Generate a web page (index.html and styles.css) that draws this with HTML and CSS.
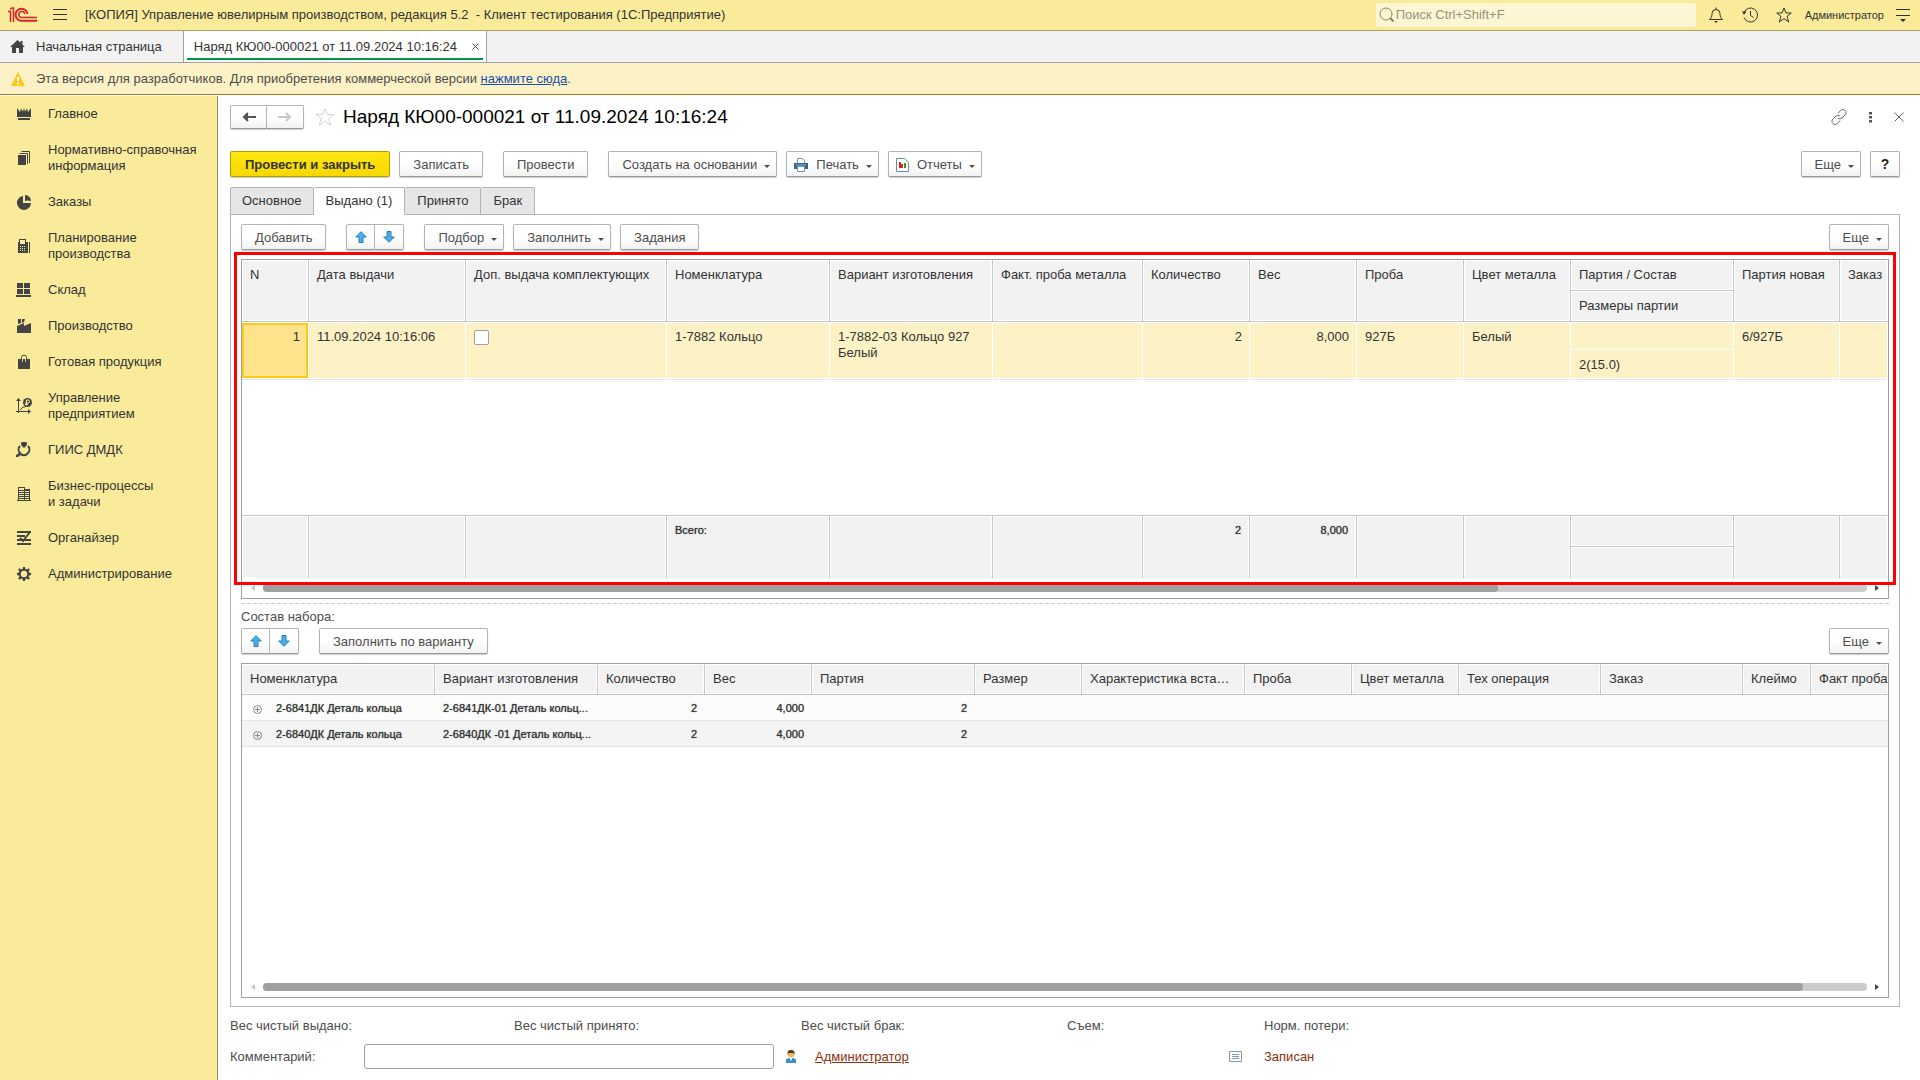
FILE: index.html
```html
<!DOCTYPE html>
<html lang="ru">
<head>
<meta charset="utf-8">
<title>Наряд КЮ00-000021 от 11.09.2024 10:16:24</title>
<link rel="stylesheet" href="styles.css">
</head>
<body>
<div class="app">
  <header class="titlebar">
    <svg class="logo" width="30" height="16" viewBox="0 0 30 16" fill="none" stroke="#d8232a"><path d="M0 4.500h2.500V15M2 2.500 4 1h1.500v14" stroke-width="1.500"/><path d="M19.500 7A6 6 0 1 0 14 13.700H29" stroke-width="2"/><path d="M16.800 7A3 3 0 1 0 14 10.500H29" stroke-width="1.500"/></svg>
    <button class="icon-btn" type="button" aria-label="Меню"><svg width="14" height="12" viewBox="0 0 14 12" stroke="#333"><path d="M0 .5h14M0 5.500h14M0 10.500h14"/></svg></button>
    <h1 class="app-title">[КОПИЯ] Управление ювелирным производством, редакция 5.2&nbsp; - Клиент тестирования (1С:Предприятие)</h1>
    <label class="search"><svg width="16" height="16" viewBox="0 0 16 16" fill="none" stroke="#8d865c"><circle cx="7" cy="7" r="6"/><path d="m11 11 3.500 3.500" stroke-width="2"/></svg><input type="text" placeholder="Поиск Ctrl+Shift+F" aria-label="Поиск"></label>
    <div class="title-tools">
      <button class="icon-btn" type="button" aria-label="Уведомления"><svg width="16" height="16" viewBox="0 0 16 16" fill="none" stroke="#333"><path d="M1.500 12.500c2-2 2.500-3 2.500-6A4 4 0 0 1 8 2.500a4 4 0 0 1 4 4c0 3 .5 4 2.500 6zM8 .5v2"/><path d="M6 14h4L8 16z" fill="#333" stroke="none"/></svg></button>
      <button class="icon-btn" type="button" aria-label="История"><svg width="16" height="16" viewBox="0 0 16 16" fill="none" stroke="#333"><path d="M2 5.500a7 7 0 1 1 0 5M8.500 4v4.500l3 2"/><path d="M0 4.500h4.500L2 8z" fill="#333" stroke="none"/></svg></button>
      <button class="icon-btn" type="button" aria-label="Избранное"><svg width="16" height="16" viewBox="0 0 16 16" fill="none" stroke="#333"><path d="m8 1 2 5h5.300l-4.200 3.300L12.700 15 8 11.600 3.300 15l1.600-5.700L.7 6H6z"/></svg></button>
    </div>
    <a class="user" href="#">Администратор</a>
    <button class="icon-btn" type="button" aria-label="Настройки"><svg width="14" height="14" viewBox="0 0 14 14"><path d="M0 1.500h14M0 7.500h14" stroke="#333"/><path d="M4 11h6l-3 3z" fill="#333"/></svg></button>
  </header>

  <nav class="windows">
    <a class="window-tab" href="#"><svg width="15" height="13" viewBox="0 0 15 13" fill="#444"><path d="M7.500 0 0 7h2v6h4V8h3v5h4V7h2l-2.500-2.300V1h-2v1.800z"/></svg>Начальная страница</a>
    <div class="window-tab is-open"><a href="#">Наряд КЮ00-000021 от 11.09.2024 10:16:24</a><button class="icon-btn" type="button" aria-label="Закрыть вкладку"><svg width="7" height="7" viewBox="0 0 7 7" stroke="#444"><path d="m.5.5 6 6m0-6-6 6"/></svg></button></div>
  </nav>

  <div class="notice">
    <svg width="14" height="14" viewBox="0 0 14 14"><path d="M7 0 14 14H0z" fill="#fbc91c"/><path d="M6 5h2v4H6zm0 5.500h2v2H6z" fill="#fff"/></svg>
    <span>Эта версия для разработчиков. Для приобретения коммерческой версии <a href="#">нажмите сюда</a>.</span>
  </div>

  <div class="workspace">
    <nav class="sections">
      <a href="#"><svg width="16" height="16" viewBox="0 0 16 16"><path d="m1 2 3 4 1-3.500 2 3L8 2l1 3.500 2-3L12 6l3-4v9H1zM2 12h12v2H2z"/></svg>Главное</a>
      <a href="#"><svg width="16" height="16" viewBox="0 0 16 16"><path d="M2 5h8v10H2z"/><path d="M3.500 3.500h8V14M5.500 1.500h8V13" fill="none" stroke="#444"/></svg>Нормативно-справочная<br>информация</a>
      <a href="#"><svg width="16" height="16" viewBox="0 0 16 16"><path d="M7 2v7h8A7 7 0 1 1 7 2z"/><path d="M9 1a6 6 0 0 1 6 6l-4-.5L9 7z"/></svg>Заказы</a>
      <a href="#"><svg width="16" height="16" viewBox="0 0 16 16"><path fill-rule="evenodd" d="M3 1h7v3h2v11H2V4h1zm1 1v4h5V2zM4 8v1h1V8zm2 0v1h1V8zm2 0v1h1V8zM4 10v1h1v-1zm2 0v1h1v-1zm2 0v1h1v-1zm-4 2v1h1v-1zm2 0v1h1v-1zm2 0v1h1v-1zM13 4h1v11h-1z"/></svg>Планирование<br>производства</a>
      <a href="#"><svg width="16" height="16" viewBox="0 0 16 16"><path d="M1 1h6v5H1zm7 0h6v5H8zM1 7h6v5H1zm7 0h6v5H8zM0 13h15v2H0z"/></svg>Склад</a>
      <a href="#"><svg width="16" height="16" viewBox="0 0 16 16"><path d="M2 1h3v4L2 6zm4 0h3L8 4 6 5zM1 8l7-3v3l7-3v10H1z"/></svg>Производство</a>
      <a href="#"><svg width="16" height="16" viewBox="0 0 16 16"><path d="M2 5h12v10H2z"/><path d="M5.500 7V3.500a2.500 2.500 0 0 1 5 0V7" fill="none" stroke="#444"/><path d="M6.500 5v2.500M9.500 5v2.500" stroke="#faeb9a"/></svg>Готовая продукция</a>
      <a href="#"><svg width="16" height="16" viewBox="0 0 16 16"><path d="M2.500 1v14M0 13.500h14M4 12l3-3h2l2-2" fill="none" stroke="#444"/><path d="M2.500 0 5 3H0zM15 13.500 12 11v5z"/><circle cx="11.500" cy="4.500" r="4.500"/><path d="M10.500 7.500V2H12a1.500 1.500 0 0 1 0 3H9M9 6.500h3" fill="none" stroke="#faeb9a"/></svg>Управление<br>предприятием</a>
      <a href="#"><svg width="16" height="16" viewBox="0 0 16 16"><path d="m5 1 1-1h4l1 1v2L8 6 5 3zM0 13l3-2 2 2-3 2H0z"/><path d="M4 4a5 5 0 0 0 0 7c2 3 6 3 8 0a5 5 0 0 0 0-7" fill="none" stroke="#444" stroke-width="2"/></svg>ГИИС ДМДК</a>
      <a href="#"><svg width="16" height="16" viewBox="0 0 16 16"><path d="M2.500 1v14M8.500 1v14M13.500 3v12M2 1.500h7M2 4.500h11M2 6.500h11M2 8.500h11M2 10.500h11M2 12.500h11M1 14.500h14M9 3.500h5" stroke="#444"/></svg>Бизнес-процессы<br>и задачи</a>
      <a href="#"><svg width="16" height="16" viewBox="0 0 16 16"><path d="M1 1h14v2H1zm0 4h8v2H1zm0 4h14v2H1zm0 4h14v2H1z"/><path d="m4 8 3 3 7-9" fill="none" stroke="#444" stroke-width="2"/></svg>Органайзер</a>
      <a href="#"><svg width="16" height="16" viewBox="0 0 16 16" fill="none" stroke="#444"><path fill="#444" stroke="none" fill-rule="evenodd" d="M7 1h2l.4 2 1.300.5L12.500 2.300l1.300 1.300-1.200 1.800.5 1.200 2 .4v2l-2 .4-.5 1.300 1.200 1.700-1.300 1.300-1.800-1.200-1.300.5L9 15H7l-.4-2-1.300-.5-1.800 1.200-1.300-1.300 1.200-1.700L3 9.400 1 9V7l2-.4.400-1.200-1.200-1.800 1.300-1.300 1.800 1.200L6.600 3zM8 4.800a3.200 3.200 0 1 0 0 6.400 3.200 3.200 0 0 0 0-6.400z"/></svg>Администрирование</a>
    </nav>

    <main class="form">
      <div class="form-head">
        <div class="pair">
          <button class="btn" type="button" aria-label="Назад"><svg width="14" height="10" viewBox="0 0 14 10" fill="none" stroke="#555" stroke-width="2"><path d="M14 5H2M6 1 2 5l4 4"/><path d="M1 5 6 1v8z" fill="#555" stroke="none"/></svg></button>
          <button class="btn" type="button" aria-label="Вперед" disabled><svg width="14" height="10" viewBox="0 0 14 10" fill="none" stroke="#c8c8c8" stroke-width="2"><path d="M0 5h12M8 1l4 4-4 4"/></svg></button>
        </div>
        <button class="icon-btn" type="button" aria-label="В избранное"><svg width="20" height="20" viewBox="0 0 20 20" fill="none" stroke="#d4d4d4"><path d="m10 1.500 2.400 6H19l-5.200 4 2 7L10 14.300 4.200 18.500l2-7L1 7.500h6.600z"/></svg></button>
        <h2>Наряд КЮ00-000021 от 11.09.2024 10:16:24</h2>
        <div class="form-tools">
          <button class="icon-btn" type="button" aria-label="Ссылка"><svg width="16" height="16" viewBox="0 0 16 16" fill="none" stroke="#666"><path d="m7 4.500 2.500-3a3 3 0 0 1 4.500 0 3 3 0 0 1 0 4.500L11 9a3 3 0 0 1-4 0M9 11.500l-2.500 3a3 3 0 0 1-4.500 0A3 3 0 0 1 2 10l3-3a3 3 0 0 1 4 0"/></svg></button>
          <button class="icon-btn" type="button" aria-label="Действия"><svg width="3" height="11" viewBox="0 0 3 11" fill="#555"><path d="M0 0h3v2.500H0zm0 4h3v2.500H0zm0 4h3v2.500H0z"/></svg></button>
          <button class="icon-btn" type="button" aria-label="Закрыть"><svg width="10" height="10" viewBox="0 0 10 10" stroke="#666"><path d="m.5.5 9 9m0-9-9 9"/></svg></button>
        </div>
      </div>

      <div class="toolbar">
        <button class="btn primary" type="button">Провести и закрыть</button>
        <button class="btn" type="button">Записать</button>
        <button class="btn apart" type="button">Провести</button>
        <button class="btn apart menu" type="button">Создать на основании</button>
        <button class="btn with-icon menu" type="button"><svg width="14" height="14" viewBox="0 0 14 14"><path d="M3.500 6V.5h5l2 2V6" fill="#fff" stroke="#7a93ab"/><path d="M0 5h14v6H0z" fill="#36648b"/><path d="M2 7h10" stroke="#8fb4d0"/><path d="M3.500 8.500h7v5h-7z" fill="#fff" stroke="#7a93ab"/></svg>Печать</button>
        <button class="btn with-icon menu" type="button"><svg width="13" height="14" viewBox="0 0 13 14"><path d="M.5.5h8l4 4v9H.5z" fill="#fff" stroke="#75899c"/><path d="M3 4h2v6H3z" fill="#e02020"/><path d="M5 6h2v4H5z" fill="#e02020"/><path d="M8 5h2v5H8z" fill="#2a9a3a"/></svg>Отчеты</button>
        <button class="btn menu push" type="button">Еще</button>
        <button class="btn help" type="button" aria-label="Справка">?</button>
      </div>

      <div class="tabs" role="tablist">
        <button type="button" role="tab">Основное</button>
        <button type="button" role="tab" aria-selected="true">Выдано (1)</button>
        <button type="button" role="tab">Принято</button>
        <button type="button" role="tab">Брак</button>
      </div>

      <section class="page">
        <div class="toolbar">
          <button class="btn" type="button">Добавить</button>
          <div class="pair movers apart">
            <button class="btn" type="button" aria-label="Вверх"><svg width="12" height="12" viewBox="0 0 12 12"><path d="M6 .7 11.300 6H8v5.500H4V6H.7z" fill="#45b0ec" stroke="#2c7fb0"/></svg></button>
            <button class="btn" type="button" aria-label="Вниз"><svg width="12" height="12" viewBox="0 0 12 12"><path d="M6 11.300.7 6H4V.5h4V6h3.300z" fill="#45b0ec" stroke="#2c7fb0"/></svg></button>
          </div>
          <button class="btn menu apart" type="button">Подбор</button>
          <button class="btn menu" type="button">Заполнить</button>
          <button class="btn" type="button">Задания</button>
          <button class="btn menu push" type="button">Еще</button>
        </div>

        <div class="grid issued">
          <div class="grid-body">
            <table>
              <colgroup><col class="w67"><col class="w157"><col class="w201"><col class="w163"><col class="w163"><col class="w150"><col class="w107"><col class="w107"><col class="w107"><col class="w107"><col class="w163"><col class="w106"><col></colgroup>
              <thead>
                <tr><th rowspan="2">N</th><th rowspan="2">Дата выдачи</th><th rowspan="2">Доп. выдача комплектующих</th><th rowspan="2">Номенклатура</th><th rowspan="2">Вариант изготовления</th><th rowspan="2">Факт. проба металла</th><th rowspan="2">Количество</th><th rowspan="2">Вес</th><th rowspan="2">Проба</th><th rowspan="2">Цвет металла</th><th>Партия / Состав</th><th rowspan="2">Партия новая</th><th rowspan="2">Заказ</th></tr>
                <tr><th>Размеры партии</th></tr>
              </thead>
              <tbody>
                <tr class="picked"><td rowspan="2" class="num current">1</td><td rowspan="2">11.09.2024 10:16:06</td><td rowspan="2"><input type="checkbox" aria-label="Доп. выдача комплектующих"></td><td rowspan="2">1-7882 Кольцо</td><td rowspan="2" class="wrap">1-7882-03 Кольцо 927 Белый</td><td rowspan="2"></td><td rowspan="2" class="num">2</td><td rowspan="2" class="num">8,000</td><td rowspan="2">927Б</td><td rowspan="2">Белый</td><td class="upper"></td><td rowspan="2">6/927Б</td><td rowspan="2"></td></tr>
                <tr class="picked"><td>2(15.0)</td></tr>
                <tr class="filler"><td colspan="13"></td></tr>
              </tbody>
              <tfoot>
                <tr><td rowspan="2"></td><td rowspan="2"></td><td rowspan="2"></td><td rowspan="2">Всего:</td><td rowspan="2"></td><td rowspan="2"></td><td rowspan="2" class="num">2</td><td rowspan="2" class="num">8,000</td><td rowspan="2"></td><td rowspan="2"></td><td class="upper"></td><td rowspan="2"></td><td rowspan="2"></td></tr>
                <tr><td class="lower"></td></tr>
              </tfoot>
            </table>
          </div>
          <div class="scroll"><i class="arrow left"></i><div class="track"><div class="thumb" style="width:77%"></div></div><i class="arrow right"></i></div>
          <div class="highlight"></div>
        </div>

        <div class="splitter"></div>
        <h3>Состав набора:</h3>
        <div class="toolbar">
          <div class="pair movers">
            <button class="btn" type="button" aria-label="Вверх"><svg width="12" height="12" viewBox="0 0 12 12"><path d="M6 .7 11.300 6H8v5.500H4V6H.7z" fill="#45b0ec" stroke="#2c7fb0"/></svg></button>
            <button class="btn" type="button" aria-label="Вниз"><svg width="12" height="12" viewBox="0 0 12 12"><path d="M6 11.300.7 6H4V.5h4V6h3.300z" fill="#45b0ec" stroke="#2c7fb0"/></svg></button>
          </div>
          <button class="btn apart" type="button">Заполнить по варианту</button>
          <button class="btn menu push" type="button">Еще</button>
        </div>

        <div class="grid kit">
          <div class="grid-body">
            <table>
              <colgroup><col class="w193"><col class="w163"><col class="w107"><col class="w107"><col class="w163"><col class="w107"><col class="w163"><col class="w107"><col class="w107"><col class="w142"><col class="w142"><col class="w68"><col></colgroup>
              <thead>
                <tr><th>Номенклатура</th><th>Вариант изготовления</th><th>Количество</th><th>Вес</th><th>Партия</th><th>Размер</th><th>Характеристика вставки</th><th>Проба</th><th>Цвет металла</th><th>Тех операция</th><th>Заказ</th><th>Клеймо</th><th>Факт проба</th></tr>
              </thead>
              <tbody>
                <tr><td><svg class="plus" width="9" height="9" viewBox="0 0 9 9" fill="none" stroke="#888"><circle cx="4.500" cy="4.500" r="4"/><path d="M2 4.500h5M4.500 2v5"/></svg>2-6841ДК Деталь кольца</td><td>2-6841ДК-01 Деталь кольц...</td><td class="num">2</td><td class="num">4,000</td><td class="num">2</td><td></td><td></td><td></td><td></td><td></td><td></td><td></td><td></td></tr>
                <tr><td><svg class="plus" width="9" height="9" viewBox="0 0 9 9" fill="none" stroke="#888"><circle cx="4.500" cy="4.500" r="4"/><path d="M2 4.500h5M4.500 2v5"/></svg>2-6840ДК Деталь кольца</td><td>2-6840ДК -01 Деталь кольц...</td><td class="num">2</td><td class="num">4,000</td><td class="num">2</td><td></td><td></td><td></td><td></td><td></td><td></td><td></td><td></td></tr>
                <tr class="filler"><td colspan="13"></td></tr>
              </tbody>
            </table>
          </div>
          <div class="scroll"><i class="arrow left"></i><div class="track"><div class="thumb" style="width:96%"></div></div><i class="arrow right"></i></div>
        </div>
      </section>

      <div class="totals"><span>Вес чистый выдано:</span><span>Вес чистый принято:</span><span>Вес чистый брак:</span><span>Съем:</span><span>Норм. потери:</span></div>
      <div class="remarks">
        <label for="comment">Комментарий:</label>
        <input id="comment" type="text">
        <div class="author"><svg width="10" height="13" viewBox="0 0 10 13"><path d="M0 13V9.500L2.500 8h5L10 9.500V13z" fill="#3a8fc4"/><path d="m3.500 8 1.500 3 1.500-3z" fill="#fff"/><circle cx="5" cy="4.200" r="3.200" fill="#f0b45c"/><path d="M1.500 5V3a3.500 3 0 0 1 7 0v2l-1-2h-5z" fill="#4a3a20"/></svg><a href="#">Администратор</a></div>
        <div class="state"><svg width="13" height="11" viewBox="0 0 13 11" fill="none" stroke="#8597a8"><path d="M.5.500h12v10H.5zM3 3.500h7M3 5.500h7M3 7.500h7"/></svg><span>Записан</span></div>
      </div>
    </main>
  </div>
</div>
</body>
</html>
```
FILE: styles.css
```css
* { box-sizing: border-box; }
body { margin: 0; font: 13px/16px "Liberation Sans", Arial, sans-serif; color: #333; background: #fff; }
button, input { font: inherit; color: inherit; }
h1, h2, h3 { margin: 0; font-size: 13px; font-weight: normal; }
svg { display: block; flex: none; }
.app { display: flex; flex-direction: column; min-height: 100vh; }
.icon-btn { display: flex; align-items: center; justify-content: center; padding: 0; border: 0; background: none; }

.titlebar { display: flex; align-items: center; height: 31px; padding: 0 10px 0 8px; background: #faeb9a; border-bottom: 1px solid #a8a15f; }
.logo { margin-right: 15px; }
.app-title { flex: 1; margin-left: 18px; white-space: nowrap; }
.search { display: flex; align-items: center; width: 320px; height: 24px; padding-left: 3px; gap: 1px; margin-right: 12px; background: #fdf6d5; border-radius: 2px; }
.search input { flex: 1; min-width: 0; padding: 0; border: 0; background: none; outline: 0; }
.search input::placeholder { color: #98937a; opacity: 1; }
.title-tools { display: flex; gap: 18px; margin-right: 13px; }
.user { margin-right: 12px; font-size: 11px; color: #333; text-decoration: none; }

.windows { display: flex; height: 32px; background: #f2f2f2; border-bottom: 1px solid #a0a0a0; }
.window-tab { display: flex; align-items: center; gap: 11px; padding: 0 21px 0 10px; color: #333; text-decoration: none; border-right: 1px solid #a0a0a0; }
.window-tab a { color: inherit; text-decoration: none; }
.window-tab.is-open { gap: 15px; padding: 0 7px 0 10px; background: linear-gradient(#009646, #009646) center 27px / calc(100% - 6px) 2px no-repeat #fff; }

.notice { display: flex; align-items: center; gap: 11px; height: 32px; padding-left: 11px; background: #fdf2c6; border-bottom: 1px solid #9a7d1c; color: #4d4d4d; }
.notice a { color: #1a4fa8; }

.workspace { display: flex; flex: 1; }
.sections { display: flex; flex-direction: column; width: 218px; flex: none; margin-top: 1px; background: #faeb9a; border-right: 1px solid #8f8a5f; }
.sections a { display: flex; align-items: center; padding: 10px 0 10px 16px; color: #333; text-decoration: none; }
.sections svg { margin-right: 16px; fill: #444; }

.form { display: flex; flex-direction: column; flex: 1; min-width: 0; padding: 10px 20px 11px 12px; }
.form-head { display: flex; align-items: center; height: 24px; margin-bottom: 22px; }
.form-head h2 { flex: 1; margin-left: 8px; font-size: 19px; line-height: 24px; color: #000; }
.form-head .pair { margin-right: 11px; }
.form-head .pair .btn { width: 37px; height: 24px; }
.form-tools { display: flex; gap: 22px; margin-right: -4px; }

.btn { display: flex; align-items: center; justify-content: center; height: 26px; padding: 1px 13px 0; white-space: nowrap; color: #4d4d4d; background: linear-gradient(#fff 50%, #f2f2f2); border: 1px solid #b3b3b3; border-bottom-color: #999; border-radius: 2px; box-shadow: 0 1px 1px #ccc; }
.btn.primary { padding: 1px 14px 0; font-weight: bold; color: #333; background: linear-gradient(#ffe612, #f8d800); border-color: #b39b00; }
.btn.menu { padding-right: 6px; }
.btn.menu::after { content: ""; margin: 3px 0 0 7px; border: 3px solid transparent; border-top-color: #4d4d4d; border-bottom-width: 0; }
.btn.with-icon { padding-left: 7px; }
.btn.with-icon svg { margin-right: 8px; }
.btn.help { width: 30px; padding: 0; font-size: 14px; font-weight: bold; color: #222; }
.pair { display: flex; }
.pair .btn { padding: 0; }
.pair .btn:first-child { border-radius: 2px 0 0 2px; }
.pair .btn:last-child { border-left: 0; border-radius: 0 2px 2px 0; }
.movers .btn { width: 29px; }
.toolbar { display: flex; gap: 9px; }
.toolbar .apart { margin-left: 11px; }
.toolbar .push { margin-left: auto; }

.tabs { display: flex; margin-top: 10px; height: 28px; margin-bottom: -1px; }
.tabs button { padding: 0 12px; background: #e6e6e6; border: 1px solid #b3b3b3; border-left: 0; border-radius: 2px 2px 0 0; }
.tabs button:first-child { padding: 0 11px; border-left: 1px solid #b3b3b3; }
.tabs button[aria-selected] { background: #fff; border-bottom-color: #fff; }

.page { display: flex; flex-direction: column; flex: 1; padding: 9px 10px 8px; border: 1px solid #b3b3b3; z-index: -1; }
.page h3 { margin: 5px 0 3px; color: #4d4d4d; }
.splitter { margin-top: 4px; height: 1px; background: repeating-linear-gradient(90deg, #ccc 0 4px, transparent 4px 6px); }

.grid { position: relative; display: flex; flex-direction: column; margin-top: 9px; border: 1px solid #a0a0a0; }
.grid.issued { height: 340px; }
.grid.kit { flex: 1; }
.grid-body { flex: 1; min-height: 0; overflow: hidden; }
.kit .grid-body { display: grid; }
table { width: 100%; height: 100%; table-layout: fixed; border-spacing: 0; }
th, td { padding: 7px 8px 0; text-align: left; vertical-align: top; font-weight: normal; white-space: nowrap; overflow: hidden; text-overflow: ellipsis; }
th { height: 31px; background: #f2f2f2; border-right: 1px solid #c6c6c6; border-bottom: 1px solid #c6c6c6; box-shadow: inset 0 0 0 1px #fff; }
th[rowspan] { height: 62px; }
th:last-child:not(:only-child) { padding-right: 0; border-right: 0; text-overflow: clip; }
.num { text-align: right; }
.wrap { white-space: normal; }
.picked td { height: 28px; background: #fdf2c6; border-right: 1px solid #fff; border-bottom: 1px solid #e6e6e6; box-shadow: inset 0 1px #fff, inset 0 -1px #fff; }
.picked td[rowspan] { height: 58px; }
.picked td.upper { border-bottom-color: #fff; box-shadow: inset 0 1px #fff; }
.picked td:only-child { height: 30px; box-shadow: inset 0 -1px #fff; }
.picked td.num { padding-right: 7px; }
.picked td.current { padding-right: 8px; background: #ffe48d; box-shadow: inset 0 1px #fff, inset 0 -1px #fff, inset 2px 0 #fbc91c, inset -2px 0 #fbc91c, inset 0 3px #fbc91c, inset 0 -3px #fbc91c; }
.picked input { appearance: none; display: block; width: 15px; height: 15px; margin: 1px 0 0; background: #fff; border: 1px solid #a0a0a0; border-radius: 2px; }
tfoot td { height: 32px; padding-top: 6px; background: #f2f2f2; border-right: 1px solid #c6c6c6; border-top: 1px solid #c6c6c6; box-shadow: inset 0 0 0 1px #fff; }
tfoot td.upper { height: 31px; }
tfoot td[rowspan] { height: 63px; }
tfoot td[rowspan]:last-child { border-right: 0; }
tfoot, .kit tbody { font-size: 11px; text-shadow: 0 0 1px #555; }
.filler td { padding: 0; }
.kit tbody tr:not(.filler) td { height: 26px; padding-top: 5px; background: #fcfcfc; border-bottom: 1px solid #e4e4e4; }
.kit tbody tr:nth-child(2) td { background: #f4f4f4; }
.kit tbody td:nth-child(2) { padding-right: 0; }
.plus { display: inline-block; margin: 0 14px 0 3px; vertical-align: -2px; }
.w67 { width: 67px; } .w68 { width: 68px; } .w106 { width: 106px; } .w107 { width: 107px; } .w142 { width: 142px; }
.w150 { width: 150px; } .w157 { width: 157px; } .w163 { width: 163px; } .w193 { width: 193px; } .w201 { width: 201px; }

.scroll { display: flex; align-items: center; gap: 8px; height: 20px; padding: 0 9px; }
.track { flex: 1; height: 8px; background: #ccc; border-radius: 4px; }
.thumb { height: 8px; background: #a0a0a0; border-radius: 4px; }
.arrow { border: 4px solid transparent; border-width: 3px 4px; }
.arrow.left { border-left-width: 0; border-right-color: #c6c6c6; }
.arrow.right { border-right-width: 0; border-left-color: #444; }
.highlight { position: absolute; inset: -8px -8px 13px; border: 3px solid #f00; pointer-events: none; }

.totals { display: grid; grid-template-columns: 284px 287px 266px 197px 1fr; margin-top: 11px; color: #4d4d4d; }
.remarks { display: grid; grid-template-columns: 134px 410px 455px 1fr; align-items: center; margin-top: 10px; color: #4d4d4d; }
.remarks input { width: 100%; height: 25px; padding: 0 6px; border: 1px solid #a0a0a0; border-radius: 3px; outline: 0; }
.author, .state { display: flex; align-items: center; }
.author { gap: 19px; padding-left: 12px; }
.author a, .state { color: #8a2f0c; }
.state { gap: 22px; }
```
